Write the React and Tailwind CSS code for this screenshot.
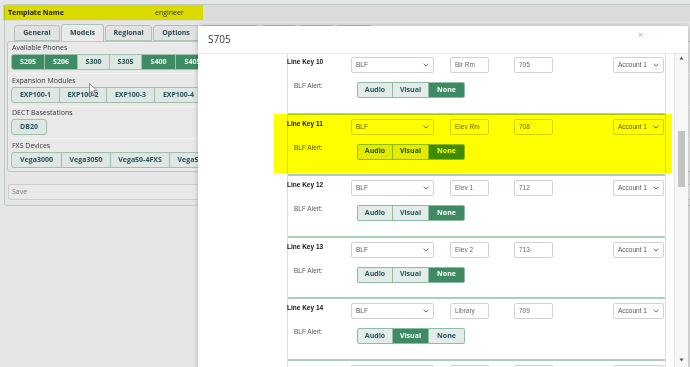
import React from 'react';

const phones = [
  { name: 'S205', w: 'w-[34px]', on: true },
  { name: 'S206', w: 'w-[34px]', on: true },
  { name: 'S300', w: 'w-[33px]', on: false },
  { name: 'S305', w: 'w-[33px]', on: false },
  { name: 'S400', w: 'w-[35px]', on: true },
  { name: 'S405', w: 'w-[35px]', on: true },
  { name: 'S505', w: 'w-[35px]', on: false },
];

const expansions = [
  { name: 'EXP100-1', w: 'w-[49px]' },
  { name: 'EXP100-2', w: 'w-[48px]' },
  { name: 'EXP100-3', w: 'w-[49px]' },
  { name: 'EXP100-4', w: 'w-[49px]' },
];

const fxs = [
  { name: 'Vega3000', w: 'w-[51px]' },
  { name: 'Vega3050', w: 'w-[50px]' },
  { name: 'Vega50-4FXS', w: 'w-[60px]' },
  { name: 'Vega5000', w: 'w-[50px]' },
];

// the last four tabs sit under the modal, only their top edge shows
const tabs = [
  { name: 'General', w: 'w-[46px]' },
  { name: 'Models', w: 'w-[43px]', active: true },
  { name: 'Regional', w: 'w-[47px]' },
  { name: 'Options', w: 'w-[46px]' },
  { name: '', w: 'w-[60px]' },
  { name: '', w: 'w-[36px]' },
  { name: '', w: 'w-[37px]' },
  { name: '', w: 'w-[37px]' },
];

const lineKeys = [
  { n: 10, label: 'Blr Rm', ext: '705', alert: 'None' },
  { n: 11, label: 'Elev Rm', ext: '708', alert: 'None', highlight: true },
  { n: 12, label: 'Elev 1', ext: '712', alert: 'None' },
  { n: 13, label: 'Elev 2', ext: '713', alert: 'None' },
  { n: 14, label: 'Library', ext: '709', alert: 'Visual' },
  { n: 15, label: 'Lobby', ext: '710', alert: 'None' },
];

const Chevron = () => (
  <svg width="6" height="4" viewBox="0 0 6 4" className="shrink-0">
    <path d="M0.6 0.8 L3 3.1 L5.4 0.8" fill="none" stroke="#555" strokeWidth="0.9" />
  </svg>
);

const GroupButton = ({ name, w, on, first }) => (
  <div
    className={`${w} h-[16px] shrink-0 flex items-center justify-center border border-[#9fc0ae] -ml-[1px] text-[7px] font-bold ${
      first ? 'rounded-l-[3px] ml-0' : ''
    } ${on ? 'bg-[#3f8b64] text-white' : 'bg-[#dfe7e3] text-[#27535e]'}`}
  >
    {name}
  </div>
);

const Select = ({ value, w }) => (
  <div className={`${w} h-[16px] shrink-0 flex items-center justify-between pl-[4px] pr-[4px] border border-[#d2d2d2] rounded-[2px] bg-white text-[6.5px] text-[#555] font-['Liberation_Sans',sans-serif]`}>
    <span>{value}</span>
    <Chevron />
  </div>
);

const TextBox = ({ value }) => (
  <div className="w-[39px] h-[16px] shrink-0 flex items-center pl-[4px] border border-[#d2d2d2] rounded-[2px] bg-white text-[6.5px] text-[#666] font-['Liberation_Sans',sans-serif]">
    {value}
  </div>
);

const LineKey = ({ n, label, ext, alert, highlight }) => (
  <div className="relative h-[61.5px] border-t-2 border-x border-t-[#a9cfba] border-x-[#dcdcdc] rounded-t-[2px]">
    <div className="flex items-start mt-[4px]">
      <div className="w-[64px] -ml-[1px] mt-[1px] text-[6.5px] leading-[8px] font-bold text-[#111] font-['Liberation_Sans',sans-serif]">
        Line Key {n}
      </div>
      <Select value="BLF" w="w-[83px]" />
      <div className="ml-[16px]">
        <TextBox value={label} />
      </div>
      <div className="ml-[25px]">
        <TextBox value={ext} />
      </div>
      <div className="ml-[60px]">
        <Select value="Account 1" w="w-[51px]" />
      </div>
    </div>
    <div className="flex items-start mt-[9px]">
      <div className="w-[69px] pl-[6px] text-[6.5px] leading-[8px] text-[#555] font-['Liberation_Sans',sans-serif]">
        BLF Alert:
      </div>
      <div className="flex">
        {['Audio', 'Visual', 'None'].map((opt, i) => (
          <div
            key={opt}
            className={`${i === 0 ? 'w-[36px] rounded-l-[2px]' : 'w-[37px] -ml-[1px]'} ${
              i === 2 ? 'rounded-r-[2px]' : ''
            } h-[16px] flex items-center justify-center border border-[#8fbba5] text-[7px] font-bold ${
              alert === opt ? 'bg-[#3e8a62] text-white' : 'bg-[#e3ece8] text-[#1f5460]'
            }`}
          >
            {opt}
          </div>
        ))}
      </div>
    </div>
    {highlight && (
      <div className="absolute -left-[14px] -right-[7px] top-[-1px] bottom-[1px] bg-[#ffff00] mix-blend-multiply" />
    )}
  </div>
);

export default function App() {
  return (
    <div className="relative w-[690px] h-[367px] overflow-hidden bg-[#e6e6e6] font-['Open_Sans',sans-serif]">
      {/* page behind the modal */}
      <div className="pt-[4px] pl-[4px]">
        <div className="relative w-[760px] h-[202px] border border-[#b8ccc2] rounded-[3px] bg-[#e6e6e6]">
          <div className="flex items-center h-[16px] bg-[#dbdbdb] text-[7px] text-[#222]">
            <div className="w-[150px] pl-[3px] font-bold">Template Name</div>
            <div className="text-[#333]">engineer</div>
          </div>
          <div className="absolute left-[-2px] top-0 w-[200px] h-[15px] bg-[#ffff00] mix-blend-multiply" />

          <div className="flex items-end gap-[1px] pl-[9px] mt-[3px] h-[17px]">
            {tabs.map((t, i) => (
              <div
                key={i}
                className={`${t.w} ${
                  t.active ? 'h-[17px] bg-[#ebebeb] border-b-0' : 'h-[16px] bg-[#e2e2e2]'
                } shrink-0 flex items-center justify-center border border-[#aac5b8] rounded-t-[3px] text-[7px] font-bold text-[#2d4b4d]`}
              >
                {t.name}
              </div>
            ))}
          </div>

          <div className="ml-[2px] h-[131px] border border-[#b3cabe] rounded-[3px] bg-[#e9e9e9] pl-[3px] pr-[2px]">
            <div className="pt-[1px] pb-[3px] border-b border-[#f3f3f3]">
              <div className="pl-[1px] text-[7px] leading-[10px] text-[#333]">Available Phones</div>
              <div className="flex mt-[1px]">
                {phones.map((p, i) => (
                  <GroupButton key={p.name} {...p} first={i === 0} />
                ))}
              </div>
            </div>
            <div className="pt-[2px] pb-[3px] border-b border-[#f3f3f3]">
              <div className="pl-[1px] text-[7px] leading-[10px] text-[#333]">Expansion Modules</div>
              <div className="flex mt-[1px]">
                {expansions.map((p, i) => (
                  <GroupButton key={p.name} {...p} first={i === 0} />
                ))}
              </div>
            </div>
            <div className="pt-[1px] pb-[3px] border-b border-[#f3f3f3]">
              <div className="pl-[1px] text-[7px] leading-[10px] text-[#333]">DECT Basestations</div>
              <div className="flex mt-[1px]">
                <div className="w-[36px] h-[16px] flex items-center justify-center border border-[#9fc0ae] rounded-[3px] bg-[#dfe7e3] text-[7px] font-bold text-[#27535e]">
                  DB20
                </div>
              </div>
            </div>
            <div className="pt-[2px]">
              <div className="pl-[1px] text-[7px] leading-[10px] text-[#333]">FXS Devices</div>
              <div className="flex mt-[1px]">
                {fxs.map((p, i) => (
                  <GroupButton key={p.name} {...p} first={i === 0} />
                ))}
              </div>
            </div>
          </div>

          <div className="ml-[3px] mt-[12px] h-[16px] flex items-center pl-[3px] border border-[#cdcdcd] rounded-[3px] bg-[#e9e9e9] text-[7px] text-[#777]">
            Save
          </div>
        </div>
      </div>

      {/* mouse cursor */}
      <svg className="absolute left-[89px] top-[83px]" width="9" height="13" viewBox="0 0 9 13">
        <path d="M0.5 0.5 L0.5 10.5 L3 8.2 L4.8 12.2 L6.3 11.5 L4.6 7.6 L8 7.6 Z" fill="#fff" stroke="#777" strokeWidth="0.8" />
      </svg>

      {/* modal */}
      <div className="absolute left-[198px] top-[26px] w-[490px] h-[345px] bg-white shadow-[0_0_5px_rgba(0,0,0,0.25)] flex flex-col">
        <div className="relative h-[28px] shrink-0 flex items-center pl-[10px] border-b border-[#e5e5e5] text-[10px] text-[#333]">
          S705
          <span className="absolute left-[440px] top-[2px] text-[9px] text-[#aaa]">×</span>
          <span className="absolute left-[452px] top-[6px] text-[6px] tracking-[2px] text-[#ddd]">_ _</span>
        </div>
        <div className="flex flex-1 overflow-hidden">
          <div className="w-[89px] shrink-0" />
          <div className="w-[379px] shrink-0 -mt-[3px]">
            {lineKeys.map((k) => (
              <LineKey key={k.n} {...k} />
            ))}
          </div>
          <div className="w-[8px] shrink-0" />
          <div className="w-[1px] shrink-0 bg-[#e6e6e6]" />
          <div className="w-[13px] shrink-0 flex flex-col items-center bg-[#f7f7f7]">
            <svg className="mt-[2px]" width="5" height="4" viewBox="0 0 5 4">
              <path d="M2.5 0.5 L4.5 3.5 L0.5 3.5 Z" fill="#555" />
            </svg>
            <div className="mt-[71px] w-[7px] h-[56px] bg-[#c3c3c3]" />
            <svg className="mt-[171px]" width="5" height="4" viewBox="0 0 5 4">
              <path d="M0.5 0.5 L4.5 0.5 L2.5 3.5 Z" fill="#555" />
            </svg>
          </div>
        </div>
      </div>
    </div>
  );
}
